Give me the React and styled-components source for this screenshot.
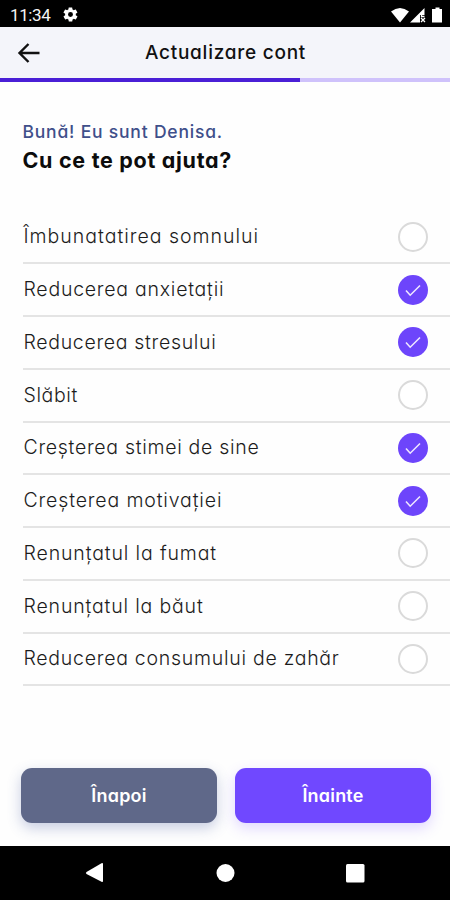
import React, { useState } from "react";
import styled, { createGlobalStyle } from "styled-components";

const GlobalStyle = createGlobalStyle`
  * {
    box-sizing: border-box;
  }

  body {
    margin: 0;
    background: #fff;
    font-family: Inter, "Open Sans", sans-serif;
    font-feature-settings: "cv11" 1;
  }
`;

const Screen = styled.div`
  display: flex;
  flex-direction: column;
  height: 900px;
  width: 450px;
  overflow: hidden;
  background: #fefefe;
`;

const StatusBar = styled.div`
  display: flex;
  align-items: center;
  height: 27px;
  flex: none;
  padding: 2px 7px 0 10px;
  background: #000;
  color: #f4f4f4;
  font-family: Roboto, sans-serif;
  font-size: 17px;
  font-weight: 400;
  letter-spacing: -0.4px;
`;

const StatusGear = styled.svg`
  margin-left: 12px;
`;

const StatusIcons = styled.svg`
  margin-left: auto;
`;

const Header = styled.header`
  display: grid;
  grid-template-columns: 60px 1fr 60px;
  align-items: center;
  height: 51px;
  flex: none;
  padding-left: 1px;
  background: #f4f5fa;
`;

const BackButton = styled.button`
  display: flex;
  padding: 0 0 0 16px;
  border: 0;
  background: none;
`;

const Title = styled.h1`
  margin: 0;
  text-align: center;
  font-size: 19px;
  font-weight: 500;
  letter-spacing: 0.75px;
  color: #111;
`;

const Progress = styled.div`
  height: 3.5px;
  flex: none;
  background: #cfc2fb;
`;

const ProgressFill = styled.div`
  height: 100%;
  background: #4a1fd6;
`;

const Intro = styled.section`
  height: 130px;
  flex: none;
  padding: 38px 22.5px 0;
`;

const Greeting = styled.p`
  margin: 0;
  font-size: 17.5px;
  line-height: 24px;
  font-weight: 500;
  letter-spacing: 0.8px;
  color: #3f4f8a;
`;

const Question = styled.h2`
  margin: 1px 0 0;
  font-size: 21.5px;
  line-height: 30px;
  font-weight: 700;
  letter-spacing: 0.7px;
  color: #0c0c0c;
`;

const List = styled.ul`
  margin: 0;
  padding: 0 0 0 23px;
  list-style: none;
  flex: none;
`;

const Row = styled.li`
  display: flex;
  align-items: center;
  justify-content: space-between;
  height: 52.75px;
  padding: 0 22px 0 0.5px;
  border-bottom: 2px solid #e4e4e4;
`;

const Label = styled.span`
  padding-bottom: 1px;
  font-size: 19.5px;
  font-weight: 300;
  letter-spacing: ${props => props.$spacing}px;
  white-space: nowrap;
  color: #1c1c1c;
`;

const Radio = styled.button`
  display: flex;
  align-items: center;
  justify-content: center;
  width: 30px;
  height: 30px;
  padding: 0;
  border: ${props => (props.$checked ? "0" : "2px solid #dadada")};
  border-radius: 50%;
  background: ${props => (props.$checked ? "#6d45fb" : "#fff")};
`;

const Actions = styled.div`
  display: grid;
  grid-template-columns: 1fr 1fr;
  gap: 18px;
  margin-top: auto;
  padding: 0 19px 23px 21px;
`;

const Button = styled.button`
  height: 55px;
  padding: 0;
  border: 0;
  border-radius: 11px;
  background: ${props => (props.$primary ? "#7048ff" : "#5f6889")};
  box-shadow: 0 5px 14px
    ${props =>
      props.$primary ? "rgba(112, 72, 255, 0.22)" : "rgba(70, 90, 160, 0.3)"};
  color: #fff;
  font: inherit;
  font-size: 18px;
  font-weight: 600;
  letter-spacing: 0.2px;
`;

const NavBar = styled.nav`
  display: flex;
  align-items: center;
  justify-content: center;
  height: 54px;
  flex: none;
  background: #000;
`;

const options = [
  { name: "Îmbunatatirea somnului", spacing: 0.99, checked: false },
  { name: "Reducerea anxietații", spacing: 0.75, checked: true },
  { name: "Reducerea stresului", spacing: 0.68, checked: true },
  { name: "Slăbit", spacing: 0.6, checked: false },
  { name: "Creșterea stimei de sine", spacing: 0.7, checked: true },
  { name: "Creșterea motivației", spacing: 0.85, checked: true },
  { name: "Renunțatul la fumat", spacing: 0.86, checked: false },
  { name: "Renunțatul la băut", spacing: 0.83, checked: false },
  { name: "Reducerea consumului de zahăr", spacing: 0.73, checked: false }
];

const Option = ({ option, onToggle }) => (
  <Row>
    <Label $spacing={option.spacing}>{option.name}</Label>
    <Radio
      $checked={option.checked}
      onClick={onToggle}
      aria-label={option.name}
    >
      {option.checked && (
        <svg width="30" height="30" viewBox="0 0 30 30" fill="none">
          <path d="M8 15.5l4.2 4.7L22 10.5" stroke="#eee6ff" strokeWidth="1.6" />
        </svg>
      )}
    </Radio>
  </Row>
);

const App = () => {
  const [items, setItems] = useState(options);

  const toggle = name =>
    setItems(
      items.map(item =>
        item.name === name ? { ...item, checked: !item.checked } : item
      )
    );

  return (
    <Screen>
      <GlobalStyle />
      <StatusBar>
        11:34
        <StatusGear width="17" height="17" viewBox="0 0 24 24" fill="#fff">
          <path d="M19.4 13c.1-.3.1-.7.1-1s0-.7-.1-1l2.1-1.6c.2-.2.3-.4.1-.7l-2-3.4c-.1-.2-.4-.3-.6-.2l-2.5 1c-.5-.4-1.1-.7-1.7-1l-.4-2.6c0-.3-.2-.5-.5-.5h-4c-.2 0-.5.2-.5.4L9 5.1c-.6.3-1.2.6-1.7 1l-2.5-1c-.2-.1-.5 0-.6.2l-2 3.4c-.1.2-.1.5.1.7L4.5 11c0 .3-.1.7-.1 1s0 .7.1 1l-2.1 1.6c-.2.2-.3.4-.1.7l2 3.4c.1.2.4.3.6.2l2.5-1c.5.4 1.1.7 1.7 1l.4 2.6c0 .3.2.5.5.5h4c.2 0 .5-.2.5-.4l.4-2.7c.6-.3 1.2-.6 1.7-1l2.5 1c.2.1.5 0 .6-.2l2-3.4c.1-.2.1-.5-.1-.7zM12 15.5a3.5 3.5 0 1 1 0-7 3.5 3.5 0 0 1 0 7z" />
        </StatusGear>
        <StatusIcons width="53" height="18" viewBox="0 0 53 18" fill="#fff">
          <path d="M1 5.5Q10 -1.5 19 5.5L10 16.5z" />
          <path d="M20 16.5L34.5 2v7H30v7.5z" />
          <path
            d="M31.5 6v4.5h3M31 12l4 4M35 12l-4 4"
            stroke="#fff"
            strokeWidth="1.3"
            fill="none"
          />
          <path d="M43 3h2.5V1.5h4V3H52v13.5H42V3z" />
        </StatusIcons>
      </StatusBar>
      <Header>
        <BackButton aria-label="Înapoi">
          <svg width="24" height="24" viewBox="0 0 24 24" fill="none">
            <path
              d="M22.5 12H2.5M11.5 3L2.5 12l9 9"
              stroke="#111"
              strokeWidth="2.4"
            />
          </svg>
        </BackButton>
        <Title>Actualizare cont</Title>
      </Header>
      <Progress>
        <ProgressFill style={{ width: `${(2 / 3) * 100}%` }} />
      </Progress>
      <Intro>
        <Greeting>Bună! Eu sunt Denisa.</Greeting>
        <Question>Cu ce te pot ajuta?</Question>
      </Intro>
      <List>
        {items.map(item => (
          <Option
            key={item.name}
            option={item}
            onToggle={() => toggle(item.name)}
          />
        ))}
      </List>
      <Actions>
        <Button>Înapoi</Button>
        <Button $primary>Înainte</Button>
      </Actions>
      <NavBar>
        <svg width="280" height="22" viewBox="0 0 280 22" fill="#fff">
          <path d="M1.5 10L16.5 1.2q1.5-.6 1.5.8v17q0 1.4-1.5.8L1.5 12q-1.2-1 0-2z" />
          <circle cx="140.5" cy="11" r="9" />
          <rect x="261" y="2" width="18.5" height="18.5" rx="1.5" />
        </svg>
      </NavBar>
    </Screen>
  );
};

export default App;
